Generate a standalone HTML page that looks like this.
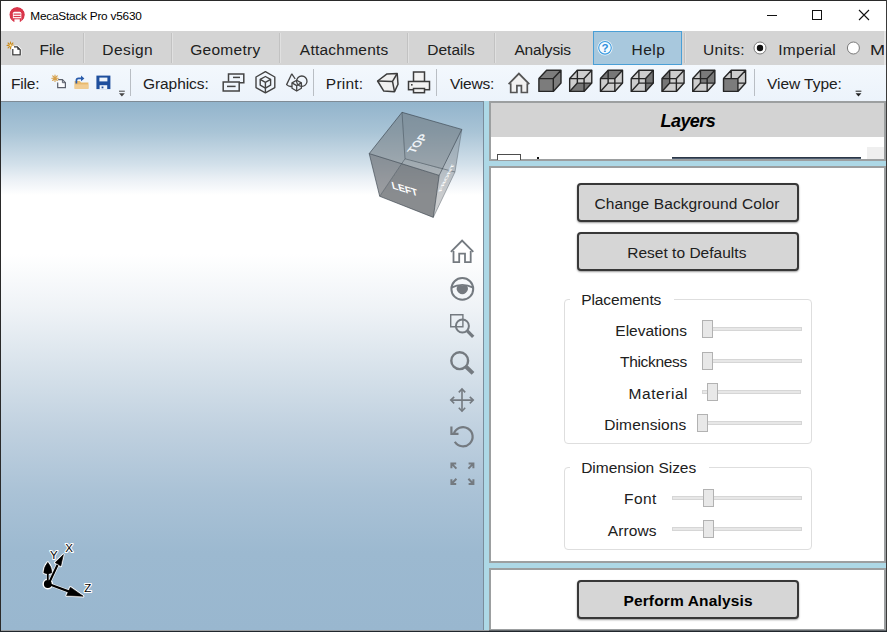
<!DOCTYPE html>
<html>
<head>
<meta charset="utf-8">
<title>MecaStack Pro v5630</title>
<style>
*{box-sizing:border-box;margin:0;padding:0}
html,body{width:887px;height:632px;overflow:hidden;background:#fff}
body{position:relative;font-family:"Liberation Sans",sans-serif;color:#202020}
.abs{position:absolute}
.t{position:absolute;white-space:nowrap;line-height:1;transform-origin:0 0}
#win{position:absolute;left:0;top:0;width:887px;height:632px;background:#fff;overflow:hidden}
#bT{left:0;top:0;width:887px;height:1px;background:#2a2a2a}
#bL{left:0;top:0;width:1px;height:632px;background:#2a2a2a}
#bR{left:886px;top:0;width:1px;height:632px;background:#3a3a3a}
#bB{left:0;top:630px;width:887px;height:2px;background:linear-gradient(rgba(30,38,46,.45) 0,rgba(30,38,46,.45) 1px,#20262c 1px,#20262c 2px)}
#menubar{left:1px;top:31px;width:885px;height:34px;background:#d4d4d4}
.msep{position:absolute;top:33px;width:1px;height:30px;background:#c2c2c2;box-shadow:1px 0 0 #e0e0e0}
#toolbar{left:1px;top:65px;width:885px;height:36px;background:linear-gradient(#f3f8fd,#ecf3fb)}
.tsep{position:absolute;top:69px;width:1px;height:27px;background:#b9bec4}
#viewport{left:1px;top:101px;width:483px;height:529px;border-top:1px solid #7f8b95;border-right:1px solid #7a8c9b;
background:linear-gradient(to bottom,#92b4cc 0px,#a9c4d6 30px,#d2e0ea 62px,#ecf1f6 78px,#ffffff 93px,#ffffff 152px,#eef2f6 209px,#d6e1ea 270px,#bfd0df 330px,#aac2d6 391px,#9cb9d0 451px,#99b7cf 528px)}
#split{left:484px;top:101px;width:402px;height:529px;background:#add8e6}
.panel{position:absolute;border:2px solid #9c9fa0;background:#fff}
#p1{left:489px;top:101px;width:397px;height:60px}
#p2{left:489px;top:166px;width:397px;height:397px}
#p3{left:489px;top:568px;width:397px;height:63px}
#lhead{left:491px;top:103px;width:393px;height:34px;background:#d3d3d3}
.btn{position:absolute;left:577px;width:222px;height:39px;background:#d6d6d6;border:2px solid #383838;border-radius:4px;box-shadow:0 1px 2px rgba(0,0,0,.4)}
.grp{position:absolute;left:564px;width:248px;border:1px solid #dedede;border-radius:4px}
.trk{position:absolute;height:4px;background:#e7e7e7;border:1px solid #d6d6d6}
.thb{position:absolute;width:11px;height:18px;background:#e8e8e8;border:1px solid #b2b2b2}
</style>
</head>
<body>
<div id="win">
<!-- title bar -->
<svg class="abs" style="left:8px;top:6px" width="18" height="18" viewBox="0 0 18 18">
<circle cx="9.100" cy="8.700" r="7.800" fill="#d9354a"/>
<path d="M4.900 17 V7.300 Q4.900 5.700 6.500 5.700 H11.700 Q13.300 5.700 13.300 7.300 V17Z" fill="#fff"/>
<rect x="5.600" y="7.500" width="7" height="1.200" fill="#d9354a"/>
<rect x="5.600" y="9.900" width="7" height="1.200" fill="#d9354a"/>
<rect x="4.900" y="12.300" width="1.500" height="4" fill="#d9354a"/><rect x="11.800" y="12.300" width="1.500" height="4" fill="#d9354a"/>
<rect x="5.600" y="12.300" width="7" height="1" fill="#d9354a"/>
<circle cx="9.100" cy="8.700" r="8.600" fill="none" stroke="#fff" stroke-width="1.600"/>
</svg>
<svg class="abs" style="left:760px;top:4px" width="120" height="24" viewBox="0 0 120 24">
<path d="M7 11.5 H17" stroke="#111" stroke-width="1"/>
<rect x="52.5" y="6.500" width="9" height="9" fill="none" stroke="#111" stroke-width="1"/>
<path d="M99 6 L109 16 M109 6 L99 16" stroke="#111" stroke-width="1.1"/>
</svg>
<!-- menu bar -->
<div class="abs" id="menubar"></div>
<!-- toolbar -->
<div class="abs" id="toolbar"></div>
<!-- viewport -->
<div class="abs" id="viewport"></div>
<!-- right side -->
<div class="abs" id="split"></div>
<div class="panel" id="p1"></div>
<div class="panel" id="p2"></div>
<div class="panel" id="p3"></div>
<div class="abs" id="lhead"></div>
<!-- menu items -->
<div class="msep" style="left:83px"></div><div class="msep" style="left:171px"></div><div class="msep" style="left:279px"></div>
<div class="msep" style="left:407px"></div><div class="msep" style="left:494px"></div><div class="msep" style="left:684px"></div>
<div class="abs" style="left:593px;top:31px;width:89px;height:34px;background:#a8c8dd;border:1px solid #4a9fd6"></div>
<svg class="abs" style="left:2.600px;top:36.500px" width="22" height="22" viewBox="0 0 22 22">
<g stroke="#c98a1e" stroke-width="1.1" stroke-linecap="round"><path d="M7.5 5 V11.800 M4.100 8.400 H10.900 M5.100 6 L9.900 10.800 M9.900 6 L5.100 10.800"/></g>
<circle cx="7.500" cy="8.400" r="1.1" fill="#ffe9a8"/>
<path d="M9.800 9.800 H14.600 L17.200 12.400 V17.800 H9.800Z" fill="#fff" stroke="#fff" stroke-width="2.6" stroke-linejoin="round"/>
<path d="M11 9.800 H14.300 L17.200 12.700 V17.800 H9.800 V12" fill="#fff" stroke="#333" stroke-width="1.2"/>
<path d="M14.300 9.800 V12.700 H17.200Z" fill="#333"/>
</svg>
<svg class="abs" style="left:596px;top:39px" width="18" height="18" viewBox="0 0 18 18">
<circle cx="9" cy="8.800" r="7.600" fill="#fff" opacity=".85"/>
<circle cx="9" cy="8.800" r="6.300" fill="#f4faff" stroke="#3a9be0" stroke-width="1.1"/>
<text x="9" y="12.800" text-anchor="middle" font-family="Liberation Sans,sans-serif" font-weight="bold" font-size="11.5" fill="#2f8fdc">?</text>
</svg>
<svg class="abs" style="left:750px;top:38px" width="120" height="20" viewBox="0 0 120 20">
<circle cx="10" cy="10" r="6" fill="#fff" stroke="#7a7a7a" stroke-width="1"/><circle cx="10" cy="10" r="3.200" fill="#111"/>
<circle cx="103.400" cy="10" r="6" fill="#fff" stroke="#7a7a7a" stroke-width="1"/>
</svg>
<div class="abs" style="left:860px;top:31px;width:24px;height:34px;overflow:hidden"><div class="t" style="left:10.300px;top:10.800px;font-size:15.5px;transform:scaleX(1.17)">Metric</div></div>
<div class="abs" style="left:884px;top:31px;width:2px;height:34px;background:#e6e6e6"></div>

<!-- toolbar -->
<div class="tsep" style="left:130px"></div><div class="tsep" style="left:313px"></div><div class="tsep" style="left:436px"></div><div class="tsep" style="left:754px"></div>
<svg class="abs" style="left:48px;top:70px" width="84" height="30" viewBox="0 0 84 30">
<!-- new -->
<g stroke="#d6a04a" stroke-width="1.1" stroke-linecap="round"><path d="M7 5 V11.400 M3.800 8.200 H10.200 M4.700 5.900 L9.300 10.500 M9.300 5.900 L4.700 10.500"/></g>
<path d="M10.200 9.700 H14.400 L17.400 12.700 V17.600 H9.700 V12.500" fill="#fbfcfe" stroke="#5b606c" stroke-width="1.2"/>
<path d="M14.400 9.700 V12.700 H17.400" fill="none" stroke="#5b606c" stroke-width="1"/>
<!-- open -->
<path d="M26.600 11 H31.800 L33.200 12.600 H40.400 V18.800 H26.600Z" fill="#e8b96c"/>
<path d="M26.600 14.400 H40.400 V18.800 H26.600Z" fill="#f0cc92"/>
<path d="M28.400 13.400 V10.600 Q28.400 8.400 30.600 8.400 H34" fill="none" stroke="#2a5cab" stroke-width="1.7"/>
<path d="M33 5.600 L36.400 8.400 L33 11.200Z" fill="#2a5cab"/>
<!-- save -->
<path d="M48.400 5.600 H62.400 V19.100 H48.400Z" fill="#1f4f9d"/>
<rect x="51.400" y="7.600" width="8" height="3.800" fill="#eef4fb"/>
<rect x="51.600" y="15.200" width="7.600" height="3.900" fill="#eef4fb"/>
<rect x="53.600" y="16.500" width="1.800" height="1.800" fill="#1f4f9d"/>
<!-- overflow -->
<path d="M71 21.200 H76.800" stroke="#444" stroke-width="1"/><path d="M71 23.300 H76.800 L73.900 26.600Z" fill="#444"/>
</svg>
<svg class="abs" style="left:218px;top:68px" width="94" height="30" viewBox="0 0 94 30">
<g fill="none" stroke="#444" stroke-width="1.5">
<path d="M10.500 13.600 V6 H25.800 V14.800 H21.600"/><path d="M15 9.400 H22"/>
<rect x="5.200" y="14" width="16" height="9"/><path d="M9 18.400 H17.600"/>
</g>
<g fill="none" stroke="#444" stroke-width="1.4" stroke-linejoin="round">
<path d="M47.400 3.700 L56.800 9 V19.600 L47.400 24.900 L38 19.600 V9Z"/>
<path d="M47.400 8.500 L52.600 11.400 V17.200 L47.400 20.100 L42.200 17.200 V11.400Z"/>
<path d="M47.400 14.300 L52.600 11.400 M47.400 14.300 L42.200 11.400 M47.400 14.300 V24.900"/>
</g>
<g fill="none" stroke="#444" stroke-width="1.3" stroke-linejoin="round">
<path d="M73.800 5.800 L68.600 16.600 Q71 19 74 18.400"/><path d="M73.800 5.800 L77.200 11"/>
<circle cx="83.800" cy="13.200" r="5.200"/>
<path d="M78.700 12.200 L83.400 14.900 V20.300 L78.700 23 L74 20.300 V14.900Z"/>
<path d="M78.700 17.600 L83.400 14.900 M78.700 17.600 L74 14.900 M78.700 17.600 V23"/>
</g>
</svg>
<svg class="abs" style="left:374px;top:68px" width="60" height="30" viewBox="0 0 60 30">
<g fill="#efefef" stroke="#3c3c3c" stroke-width="1.5" stroke-linejoin="round">
<path d="M3.600 13 L13 5.900 L23.200 5.500 L24 16.200 L20.500 23.700 L9.800 23.100Z"/>
<path d="M3.600 13 L18.500 13.400 L23.200 5.500 M18.500 13.400 L20.500 23.700" fill="none"/>
</g>
<g fill="#f2f2f2" stroke="#3c3c3c" stroke-width="1.5">
<rect x="39.500" y="4" width="11" height="9.600"/>
<rect x="34.500" y="13.500" width="21" height="8.200"/>
<rect x="39.500" y="20.500" width="11" height="4.200"/>
</g>
<rect x="37" y="16" width="1.600" height="1.600" fill="#3c3c3c"/>
</svg>
<svg class="abs" style="left:504px;top:67px" width="250" height="30" viewBox="0 0 250 30">
<path d="M6.700 16.300 V25.500 H12.900 V18.600 H17.400 V25.500 H23.300 V16.300 L14.900 7.200Z" fill="#f1f1f1" stroke="none"/>
<path d="M4.600 17.100 L14.900 6.600 L25.300 17.100" fill="none" stroke="#555" stroke-width="1.800"/>
<path d="M6.700 16.300 V25.500 H12.900 V18.600 H17.400 V25.500 H23.300 V16.300" fill="none" stroke="#555" stroke-width="1.700"/>
<!-- cube1 solid -->
<g transform="translate(34.900,3.300)"><path d="M0 8.300 L7.700 0 H22.100 V12.800 L14.400 21.100 H0Z" fill="#7c7c7c"/>
<path d="M0 8.300 H14.400 V21.100 H0Z M0 8.300 L7.700 0 H22.100 L14.400 8.300 M22.100 0 V12.800 L14.400 21.100" fill="none" stroke="#262626" stroke-width="1.4" stroke-linejoin="round"/></g>
<!-- cube2 bottom dark -->
<g transform="translate(65.670,3.300)"><path d="M0 8.300 L7.700 0 H22.100 V12.800 L14.400 21.100 H0Z" fill="#cdcdcd"/><path d="M0 21.100 L7.700 12.800 H22.100 L14.400 21.100Z" fill="#767676"/><g fill="none" stroke="#262626" stroke-width="1.4" stroke-linejoin="round"><path d="M0 8.300 H14.400 V21.100 H0Z"/><path d="M7.700 0 H22.100 V12.800 H7.700Z"/><path d="M0 8.300 L7.700 0 M14.400 8.300 L22.100 0 M14.400 21.100 L22.100 12.800 M0 21.100 L7.700 12.800"/></g></g>
<!-- cube3 top dark -->
<g transform="translate(96.440,3.300)"><path d="M0 8.300 L7.700 0 H22.100 V12.800 L14.400 21.100 H0Z" fill="#cdcdcd"/><path d="M0 8.300 L7.700 0 H22.100 L14.400 8.300Z" fill="#767676"/><g fill="none" stroke="#262626" stroke-width="1.4" stroke-linejoin="round"><path d="M0 8.300 H14.400 V21.100 H0Z"/><path d="M7.700 0 H22.100 V12.800 H7.700Z"/><path d="M0 8.300 L7.700 0 M14.400 8.300 L22.100 0 M14.400 21.100 L22.100 12.800 M0 21.100 L7.700 12.800"/></g></g>
<!-- cube4 right dark -->
<g transform="translate(127.210,3.300)"><path d="M0 8.300 L7.700 0 H22.100 V12.800 L14.400 21.100 H0Z" fill="#cdcdcd"/><path d="M14.400 8.300 L22.100 0 V12.800 L14.400 21.100Z" fill="#767676"/><g fill="none" stroke="#262626" stroke-width="1.4" stroke-linejoin="round"><path d="M0 8.300 H14.400 V21.100 H0Z"/><path d="M7.700 0 H22.100 V12.800 H7.700Z"/><path d="M0 8.300 L7.700 0 M14.400 8.300 L22.100 0 M14.400 21.100 L22.100 12.800 M0 21.100 L7.700 12.800"/></g></g>
<!-- cube5 left dark -->
<g transform="translate(157.980,3.300)"><path d="M0 8.300 L7.700 0 H22.100 V12.800 L14.400 21.100 H0Z" fill="#cdcdcd"/><path d="M0 8.300 L7.700 0 V12.800 L0 21.100Z" fill="#767676"/><g fill="none" stroke="#262626" stroke-width="1.4" stroke-linejoin="round"><path d="M0 8.300 H14.400 V21.100 H0Z"/><path d="M7.700 0 H22.100 V12.800 H7.700Z"/><path d="M0 8.300 L7.700 0 M14.400 8.300 L22.100 0 M14.400 21.100 L22.100 12.800 M0 21.100 L7.700 12.800"/></g></g>
<!-- cube6 back dark -->
<g transform="translate(188.750,3.300)"><path d="M0 8.300 L7.700 0 H22.100 V12.800 L14.400 21.100 H0Z" fill="#cdcdcd"/><path d="M7.700 0 H22.100 V12.800 H7.700Z" fill="#7a7a7a"/><g fill="none" stroke="#262626" stroke-width="1.4" stroke-linejoin="round"><path d="M0 8.300 H14.400 V21.100 H0Z"/><path d="M7.700 0 H22.100 V12.800 H7.700Z"/><path d="M0 8.300 L7.700 0 M14.400 8.300 L22.100 0 M14.400 21.100 L22.100 12.800 M0 21.100 L7.700 12.800"/></g></g>
<!-- cube7 front dark -->
<g transform="translate(219.520,3.300)"><path d="M0 8.300 L7.700 0 H22.100 V12.800 L14.400 21.100 H0Z" fill="#cdcdcd"/><path d="M0 8.300 H14.400 V21.100 H0Z" fill="#7c7c7c"/>
<path d="M0 8.300 H14.400 V21.100 H0Z M0 8.300 L7.700 0 H22.100 L14.400 8.300 M22.100 0 V12.800 L14.400 21.100 M7.700 0 V8.300 M14.400 12.800 H22.100" fill="none" stroke="#262626" stroke-width="1.4" stroke-linejoin="round"/></g>
</svg>
<svg class="abs" style="left:850px;top:86px" width="16" height="14" viewBox="0 0 16 14">
<path d="M5.600 5.200 H11.400" stroke="#222" stroke-width="1"/><path d="M5.600 7.300 H11.400 L8.500 10.600Z" fill="#222"/>
</svg>

<!-- viewport overlay -->
<svg class="abs" style="left:0;top:0" width="887" height="632" viewBox="0 0 887 632">
<!-- view cube -->
<g stroke="none">
<path d="M402 112.300 L461.800 129.400 L441.800 170.100 L405 158.800Z" fill="rgba(104,110,116,.54)"/>
<path d="M402 112.300 L405 158.800 L401.900 163.700 L369.200 153.600Z" fill="rgba(106,111,116,.50)"/>
<path d="M405 158.800 L441.800 170.100 L439.200 175.400 L401.900 163.700Z" fill="rgba(104,108,112,.46)"/>
<path d="M401.900 163.700 L439.200 175.400 L433.300 217.400 L379.700 196.300Z" fill="rgba(96,100,104,.74)"/>
<path d="M369.200 153.600 L401.900 163.700 L379.700 196.300Z" fill="rgba(98,102,106,.64)"/>
<path d="M439.200 175.400 L461.800 129.400 L455 172 L433.300 217.400Z" fill="rgba(108,114,120,.36)"/>
</g>
<g fill="none" stroke="rgba(52,62,72,.6)" stroke-width="1" stroke-linejoin="round">
<path d="M402 112.300 L461.800 129.400 L439.200 175.400 L369.200 153.600Z"/>
<path d="M369.200 153.600 L379.700 196.300 L433.300 217.400 L439.200 175.400"/>
<path d="M402 112.300 L405 158.800 L379.700 196.300 M405 158.800 L455 172" stroke="rgba(52,62,72,.45)"/>
<path d="M461.800 129.400 L455 172 L433.300 217.400" stroke="rgba(70,80,90,.4)"/>
</g>
<g font-family="Liberation Sans,sans-serif" font-weight="bold" fill="#fff">
<text transform="matrix(.62,-.78,.94,.27,413.900,153.800)" font-size="11.500" fill="#eef3f7">TOP</text>
<text transform="matrix(.94,.29,.22,.92,392.600,188.600)" font-size="11">LEFT</text>
<text transform="matrix(.44,-.9,.5,-.1,441.200,191.500)" font-size="9" fill="#fff" opacity=".95">FRONT</text>
</g>
<!-- nav icons -->
<g fill="none" stroke="#747a80" stroke-width="1.9" stroke-linejoin="miter">
<path d="M450.900 251.800 L462.100 240.700 L473.300 251.800" stroke-width="1.9"/>
<path d="M453.500 251 V262.200 H459.200 V253.700 H465 V262.200 H470.700 V251" stroke-width="1.8"/>
<circle cx="462.300" cy="288.900" r="10.900" stroke-width="2"/>
<path d="M451.400 287.600 Q462.300 282.200 473.200 287.600" stroke-width="1.9"/>
<path d="M457.700 285.600 A5.500 5.500 0 1 0 466.900 285.600Z" fill="#74797f" stroke="none"/>
<path d="M450.700 314.800 H462.900 V326.700 H450.700Z" stroke-width="1.4"/>
<circle cx="462.400" cy="326" r="6.500" stroke-width="2"/>
<path d="M467.300 330.900 L473.200 336.800" stroke-width="3.300"/>
<circle cx="459.700" cy="360.700" r="8.400" stroke-width="2.400"/>
<path d="M466.100 366.800 L473 373.400" stroke-width="4"/>
<g stroke-width="1.600">
<path d="M462 389 V411.200 M450.800 400.100 H473.200"/>
<path d="M458.800 392.400 L462 389 L465.200 392.400 M458.800 407.800 L462 411.200 L465.200 407.800 M454.200 396.900 L450.800 400.100 L454.200 403.300 M469.800 396.900 L473.200 400.100 L469.800 403.300"/>
</g>
<path d="M453.800 434 A9.600 9.600 0 1 1 454.800 441.700" stroke-width="2.200"/>
<path d="M451.400 426.500 V433.800 H458.500" stroke-width="2.200"/>
<g stroke-width="2">
<path d="M456.400 468.600 L451.400 463.400 M451.400 468.200 V463.400 H456.200"/>
<path d="M468.400 468.600 L473.400 463.400 M473.400 468.200 V463.400 H468.600"/>
<path d="M456.400 478.800 L451.400 484 M451.400 479.200 V484 H456.200"/>
<path d="M468.400 478.800 L473.400 484 M473.400 479.200 V484 H468.600"/>
</g>
</g>
<!-- axis triad -->
<g stroke="#fff" stroke-width="2.400" stroke-linejoin="round" fill="#fff">
<path d="M49 583 L57.500 565 M50 584.500 L72 592.600" stroke-width="3.400"/>
<path d="M55.200 562.600 L63.400 554.600 L60.800 566Z"/>
<path d="M70.400 587.200 L83.200 596.200 L66.600 595.600Z"/>
<path d="M47.800 573 V580"/>
<path d="M43.800 572.800 Q43.800 567 47.800 562.400 Q51.800 567 51.800 572.800 Q47.800 575 43.800 572.800Z"/>
<circle cx="47.800" cy="584" r="4.200"/>
</g>
<g stroke="#000" fill="#000" stroke-linejoin="round">
<path d="M49 583 L57.500 565" stroke-width="2.100"/>
<path d="M50 584.500 L72 592.600" stroke-width="2.300"/>
<path d="M55.200 562.600 L63.400 554.600 L60.800 566Z" stroke-width=".6"/>
<path d="M70.400 587.200 L83.200 596.200 L66.600 595.600Z" stroke-width=".6"/>
<path d="M47.800 573 V580" stroke-width="1.800"/>
<path d="M43.800 572.800 Q43.800 567 47.800 562.400 Q51.800 567 51.800 572.800 Q47.800 575 43.800 572.800Z" stroke-width=".6"/>
<circle cx="47.800" cy="584" r="3.900" stroke="none"/>
</g>
<g font-family="Liberation Sans,sans-serif" font-size="11.500" fill="#000" stroke="#fff" stroke-width="2.200" paint-order="stroke" stroke-linejoin="round">
<text x="50" y="559.300">Y</text><text x="65.300" y="552.300">X</text><text x="84.300" y="592.300">Z</text>
</g>
</svg>

<!-- panel contents -->
<div class="abs" style="left:497px;top:154px;width:24px;height:6px;border:1px solid #4d4d4d;border-bottom:none;background:#fff"></div>
<div class="abs" style="left:537px;top:157px;width:2px;height:2px;background:#111"></div>
<div class="abs" style="left:672px;top:157px;width:189px;height:2px;background:linear-gradient(#1c2430,#5d6f86)"></div>
<div class="abs" style="left:867px;top:147px;width:17px;height:12px;background:#efefef"></div>
<div class="btn" style="top:183px"></div>
<div class="btn" style="top:232px"></div>
<div class="btn" style="top:580px"></div>
<div class="grp" style="top:299px;height:145px"></div>
<div class="abs" style="left:570px;top:296px;width:104px;height:8px;background:#fff"></div>
<div class="grp" style="top:467px;height:83px"></div>
<div class="abs" style="left:570px;top:464px;width:139px;height:8px;background:#fff"></div>
<div class="trk" style="left:702px;top:327px;width:100px"></div><div class="thb" style="left:702px;top:320px"></div>
<div class="trk" style="left:702px;top:359px;width:100px"></div><div class="thb" style="left:702px;top:352px"></div>
<div class="trk" style="left:702px;top:390px;width:99px"></div><div class="thb" style="left:707px;top:383px"></div>
<div class="trk" style="left:697px;top:421px;width:105px"></div><div class="thb" style="left:697px;top:414px"></div>
<div class="trk" style="left:672px;top:496px;width:130px"></div><div class="thb" style="left:703px;top:489px"></div>
<div class="trk" style="left:672px;top:527px;width:130px"></div><div class="thb" style="left:703px;top:520px"></div>

<div class="t" style="left:30.3px;top:10.7px;font-size:11.8px;letter-spacing:-0.217px;color:#000">MecaStack Pro v5630</div>
<div class="t" style="left:39.6px;top:41.8px;font-size:15.5px;letter-spacing:-0.1px;">File</div>
<div class="t" style="left:102.3px;top:41.8px;font-size:15.5px;letter-spacing:0.44px;">Design</div>
<div class="t" style="left:190.2px;top:41.8px;font-size:15.5px;letter-spacing:0.286px;">Geometry</div>
<div class="t" style="left:299.8px;top:41.8px;font-size:15.5px;letter-spacing:0.24px;">Attachments</div>
<div class="t" style="left:427.3px;top:41.8px;font-size:15.5px;letter-spacing:0.0px;">Details</div>
<div class="t" style="left:514.4px;top:41.8px;font-size:15.5px;letter-spacing:-0.143px;">Analysis</div>
<div class="t" style="left:631.6px;top:41.8px;font-size:15.5px;letter-spacing:0.467px;">Help</div>
<div class="t" style="left:703px;top:41.8px;font-size:15.5px;letter-spacing:0.4px;">Units:</div>
<div class="t" style="left:778.2px;top:41.8px;font-size:15.5px;letter-spacing:0.357px;">Imperial</div>
<div class="t" style="left:10.9px;top:75.5px;font-size:15.5px;letter-spacing:-0.15px;">File:</div>
<div class="t" style="left:142.9px;top:75.5px;font-size:15.5px;letter-spacing:-0.05px;">Graphics:</div>
<div class="t" style="left:325.8px;top:75.5px;font-size:15.5px;letter-spacing:0.24px;">Print:</div>
<div class="t" style="left:450px;top:75.5px;font-size:15.5px;letter-spacing:-0.2px;">Views:</div>
<div class="t" style="left:767px;top:75.5px;font-size:15.5px;letter-spacing:-0.044px;">View Type:</div>
<div class="t" style="left:660.6px;top:112px;font-size:18px;letter-spacing:-0.58px;font-weight:bold;font-style:italic;color:#000">Layers</div>
<div class="t" style="left:594.4px;top:195.7px;font-size:15.5px;letter-spacing:0.105px;">Change Background Color</div>
<div class="t" style="left:627.2px;top:245.1px;font-size:15.5px;letter-spacing:0.019px;">Reset to Defaults</div>
<div class="t" style="left:581.2px;top:291.6px;font-size:15.5px;letter-spacing:-0.089px;">Placements</div>
<div class="t" style="left:615.3px;top:322.9px;font-size:15.5px;letter-spacing:0.011px;">Elevations</div>
<div class="t" style="left:620px;top:353.8px;font-size:15.5px;letter-spacing:-0.325px;">Thickness</div>
<div class="t" style="left:628.5px;top:385.7px;font-size:15.5px;letter-spacing:0.557px;">Material</div>
<div class="t" style="left:604.2px;top:417px;font-size:15.5px;letter-spacing:0.133px;">Dimensions</div>
<div class="t" style="left:581.2px;top:460.1px;font-size:15.5px;letter-spacing:-0.029px;">Dimension Sizes</div>
<div class="t" style="left:624.1px;top:491.1px;font-size:15.5px;letter-spacing:0.433px;">Font</div>
<div class="t" style="left:607.8px;top:522.6px;font-size:15.5px;letter-spacing:0.12px;">Arrows</div>
<div class="t" style="left:623.4px;top:592.6px;font-size:15.5px;letter-spacing:0.147px;font-weight:bold;color:#000">Perform Analysis</div>
<div class="abs" id="bT"></div><div class="abs" id="bL"></div><div class="abs" id="bR"></div><div class="abs" id="bB"></div>
</div>
</body>
</html>
